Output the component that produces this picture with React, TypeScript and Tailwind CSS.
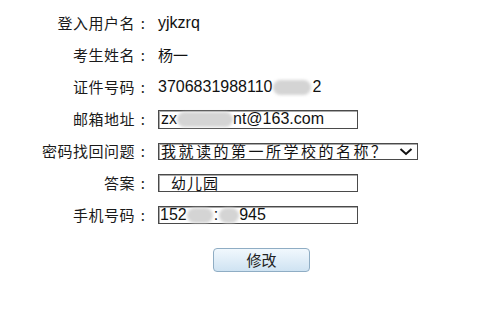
import React from "react";

const cjk = "font-['Noto_Sans_CJK_SC','Microsoft_YaHei',sans-serif]";
const latin = "font-['Liberation_Sans','Noto_Sans_CJK_SC',sans-serif]";

function Blur({ w }: { w: number }) {
  return (
    <span
      className="inline-block h-[15px] rounded-full bg-[#d4d4d4] blur-[1.5px] align-middle"
      style={{ width: w }}
    />
  );
}

function Row({ label, children }: { label: string; children: React.ReactNode }) {
  return (
    <div className="flex h-[32px] items-center">
      <div className={`flex w-[151px] shrink-0 justify-end text-[15px] tracking-[0.5px] text-[#1a1a1a] ${cjk}`}>
        <span>{label}</span>
        <span className="w-[16px] text-center">:</span>
      </div>
      <div className="ml-[7px] flex items-center">{children}</div>
    </div>
  );
}

const box =
  "flex items-center border-[1.5px] border-[#4a4a4a] bg-white shadow-[inset_1px_1px_0_#aaa] text-[#111]";

export default function App() {
  return (
    <div className="h-[318px] w-[500px] bg-white pt-[7px] text-[#111]">
      <Row label="登入用户名">
        <span className={`text-[16px] ${latin}`}>yjkzrq</span>
      </Row>
      <Row label="考生姓名">
        <span className={`text-[15px] ${cjk}`}>杨一</span>
      </Row>
      <Row label="证件号码">
        <span className={`flex items-center text-[16px] ${latin}`}>
          3706831988110
          <Blur w={38} />
          <span className="ml-[2px]">2</span>
        </span>
      </Row>
      <Row label="邮箱地址">
        <div className={`${box} h-[19px] w-[200px] pl-[2px] text-[16px] ${latin}`}>
          zx
          <Blur w={56} />
          nt@163.com
        </div>
      </Row>
      <Row label="密码找回问题">
        <div className={`${box} h-[17px] w-[260px] justify-between pl-[2px] pr-[4px] text-[15px] tracking-[2.5px] ${cjk}`}>
          <span>我就读的第一所学校的名称？</span>
          <svg width="14" height="9" viewBox="0 0 14 9" className="shrink-0">
            <polyline points="1.5,2 7,7 12.5,2" fill="none" stroke="#111" strokeWidth="2" />
          </svg>
        </div>
      </Row>
      <Row label="答案">
        <div className={`${box} h-[18px] w-[200px] pl-[12px] text-[15px] tracking-[1px] ${cjk}`}>
          幼儿园
        </div>
      </Row>
      <Row label="手机号码">
        <div className={`${box} h-[18px] w-[200px] pl-[1px] text-[16px] ${latin}`}>
          152
          <Blur w={26} />
          <span className="mx-[1px]">:</span>
          <Blur w={20} />
          945
        </div>
      </Row>
      <div className="mt-[17px] flex pl-[213px]">
        <button
          className={`h-[24px] w-[97px] rounded-[4px] border border-[#8fadc4] bg-gradient-to-b from-[#f1f8fd] to-[#cfe3f2] text-[15px] text-[#222] ${cjk}`}
        >
          修改
        </button>
      </div>
    </div>
  );
}
